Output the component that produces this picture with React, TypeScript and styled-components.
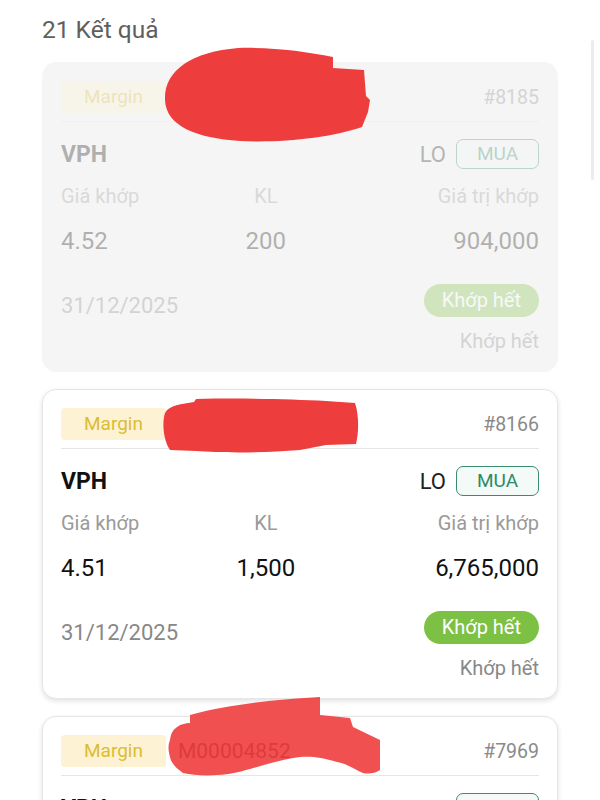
import React from "react";
import styled, { createGlobalStyle, css } from "styled-components";

const Global = createGlobalStyle`
  html, body { margin: 0; padding: 0; background: #fff; }
  body { font-family: Roboto, "Noto Sans", "Liberation Sans", sans-serif; }
`;

const Page = styled.div`
  position: relative;
  width: 600px;
  height: 800px;
  overflow: hidden;
  box-sizing: border-box;
  padding: 16px 42px 0;
`;

const Title = styled.div`
  font-size: 24.5px;
  line-height: 28px;
  color: #5f5f5f;
  margin-bottom: 18px;
`;

const List = styled.div`
  display: flex;
  flex-direction: column;
  gap: 17px;
`;

const Card = styled.div<{ $faded?: boolean }>`
  box-sizing: border-box;
  border-radius: 14px;
  padding: 18px;
  background: #fff;
  border: 1px solid #e6e6e6;
  box-shadow: 0 2px 5px rgba(0, 0, 0, 0.12);
  ${(p) =>
    p.$faded &&
    css`
      background: #f5f5f5;
      border-color: #f5f5f5;
      box-shadow: none;
    `}
`;

const Inner = styled.div<{ $faded?: boolean }>`
  display: flex;
  flex-direction: column;
  opacity: ${(p) => (p.$faded ? 0.3 : 1)};
`;

const Header = styled.div`
  display: flex;
  align-items: center;
  height: 32px;
`;

const AccountBadge = styled.span`
  height: 32px;
  line-height: 32px;
  padding: 0 23px;
  border-radius: 4px;
  background: #fdf2d4;
  color: #dcbd32;
  font-size: 19px;
`;

const Account = styled.span`
  margin-left: 12px;
  font-size: 21px;
  color: #3a2a2a;
`;

const OrderNo = styled.span`
  margin-left: auto;
  font-size: 19.5px;
  color: #8a8a8a;
`;

const Divider = styled.div`
  height: 1px;
  background: #e6e6e6;
  margin-top: 8px;
`;

const MainRow = styled.div`
  margin-top: 17px;
  height: 30px;
  display: flex;
  align-items: center;
  justify-content: space-between;
`;

const Symbol = styled.span`
  font-size: 23px;
  font-weight: 700;
  color: #111;
`;

const TypeGroup = styled.div`
  display: flex;
  align-items: center;
  gap: 10px;
`;

const OrderType = styled.span`
  font-size: 22px;
  color: #222;
`;

const SideBadge = styled.span`
  box-sizing: border-box;
  width: 83px;
  height: 30px;
  line-height: 27px;
  text-align: center;
  border: 1.5px solid #3a8c6e;
  border-radius: 7px;
  background: #f4faf7;
  color: #2e8a68;
  font-size: 19px;
`;

const Grid = styled.div<{ $gap: number }>`
  display: grid;
  grid-template-columns: 2fr 2fr 3fr;
  margin-top: ${(p) => p.$gap}px;
  & > :nth-child(2) { text-align: center; }
  & > :nth-child(3) { text-align: right; }
`;

const Label = styled.span`
  font-size: 20px;
  line-height: 24px;
  color: #9a9a9a;
`;

const Value = styled.span`
  font-size: 24px;
  line-height: 28px;
  color: #111;
`;

const Footer = styled.div`
  margin-top: 29px;
  display: flex;
  justify-content: space-between;
  align-items: flex-end;
`;

const DateText = styled.span`
  font-size: 22px;
  line-height: 22px;
  color: #888;
`;

const StatusPill = styled.span`
  height: 33px;
  line-height: 33px;
  padding: 0 18px;
  border-radius: 17px;
  background: #7cc143;
  color: #fff;
  font-size: 20px;
`;

const StatusText = styled.div`
  margin-top: 12px;
  text-align: right;
  font-size: 20px;
  line-height: 24px;
  color: #888;
`;

const ScrollThumb = styled.div`
  position: absolute;
  right: 6px;
  top: 40px;
  width: 3px;
  height: 140px;
  border-radius: 2px;
  background: #ececec;
`;

const Scribbles = styled.svg`
  position: absolute;
  left: 0;
  top: 0;
  width: 600px;
  height: 800px;
  pointer-events: none;
`;

type Order = {
  no: string;
  account: string;
  symbol: string;
  price: string;
  qty: string;
  value: string;
  date: string;
  faded?: boolean;
};

const orders: Order[] = [
  { no: "#8185", account: "M00004852", symbol: "VPH", price: "4.52", qty: "200", value: "904,000", date: "31/12/2025", faded: true },
  { no: "#8166", account: "M00004852", symbol: "VPH", price: "4.51", qty: "1,500", value: "6,765,000", date: "31/12/2025" },
  { no: "#7969", account: "M00004852", symbol: "VPH", price: "4.50", qty: "1,000", value: "4,500,000", date: "31/12/2025" },
];

function OrderCard({ o }: { o: Order }) {
  return (
    <Card $faded={o.faded}>
      <Inner $faded={o.faded}>
        <Header>
          <AccountBadge>Margin</AccountBadge>
          <Account>{o.account}</Account>
          <OrderNo>{o.no}</OrderNo>
        </Header>
        <Divider />
        <MainRow>
          <Symbol>{o.symbol}</Symbol>
          <TypeGroup>
            <OrderType>LO</OrderType>
            <SideBadge>MUA</SideBadge>
          </TypeGroup>
        </MainRow>
        <Grid $gap={15}>
          <Label>Giá khớp</Label>
          <Label>KL</Label>
          <Label>Giá trị khớp</Label>
        </Grid>
        <Grid $gap={19}>
          <Value>{o.price}</Value>
          <Value>{o.qty}</Value>
          <Value>{o.value}</Value>
        </Grid>
        <Footer>
          <DateText>{o.date}</DateText>
          <StatusPill>Khớp hết</StatusPill>
        </Footer>
        <StatusText>Khớp hết</StatusText>
      </Inner>
    </Card>
  );
}

export default function App() {
  return (
    <>
      <Global />
      <Page>
        <Title>21 Kết quả</Title>
        <List>
          {orders.map((o) => (
            <OrderCard key={o.no} o={o} />
          ))}
        </List>
        <ScrollThumb />
        <Scribbles viewBox="0 0 600 800">
          <path
            fill="#ee3d3d"
            d="M165,100 C164,70 192,52 238,48 C270,47 305,51 333,57 L333,68 L364,70 L366,96 L370,100 L368,112 L362,127 C330,138 282,143 240,141 C196,138 166,126 165,100 Z"
          />
          <path
            fill="#ee3d3d"
            d="M165,413 C169,405 182,404 194,402 L196,399 C240,398 290,399 326,401 L355,403 C359,415 359,432 356,444 L326,445 L300,450 C262,453 222,453 196,451 L170,450 C163,440 162,422 165,413 Z"
          />
          <path
            fill="#ee3d3d"
            fillOpacity="0.9"
            d="M190,715 C230,704 280,699 320,697 L320,715 L350,718 L353,727 L380,740 L380,770 C374,774 368,774 363,773 C352,768 345,763 337,762 C322,757 310,756 300,757 C285,759 270,763 257,767 C243,771 230,775 217,775 C205,776 192,775 183,773 C176,768 171,763 170,757 C168,750 168,745 170,740 C171,733 173,730 177,727 C181,724 186,723 190,723 Z"
          />
        </Scribbles>
      </Page>
    </>
  );
}
